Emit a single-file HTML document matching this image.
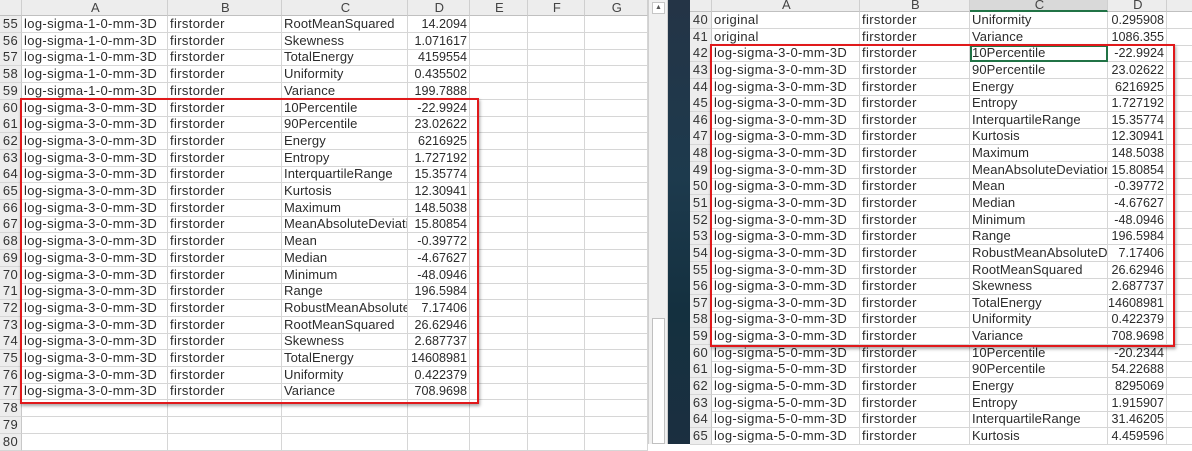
<!DOCTYPE html>
<html><head><meta charset="utf-8"><style>
*{margin:0;padding:0;box-sizing:border-box}
body{width:1192px;height:444px;overflow:hidden;background:#fff;font-family:"Liberation Sans","Noto Sans CJK SC",sans-serif;font-size:13px;color:#2b2b2b;position:relative}
.r{position:absolute;display:flex;height:17px;line-height:16px;white-space:nowrap}
.r div{border-right:1px solid #d6d6d6;border-bottom:1px solid #d6d6d6;overflow:hidden;padding-left:2px;letter-spacing:0.35px;flex:none}
.r .c3{letter-spacing:0.1px}
.r .n{background:#ededed;text-align:center;padding:0;color:#333;border-right:1px solid #c8c8c8}
.r .d{text-align:right;padding:0 2px 0 0;letter-spacing:0;font-size:12.6px}
.h div{background:#ededed;text-align:center;color:#444;border-right:1px solid #cfcfcf;border-bottom:1px solid #c0c0c0}
#L .r{left:0}
#L .c0{width:22px}#L .c1{width:146px}#L .c2{width:114px}#L .c3{width:126px}#L .c4{width:62px}#L .c5{width:58px}#L .c6{width:57px}#L .c7{width:63px}
#R .r{left:690px}
#R .c0{width:22px}#R .c1{width:148px}#R .c2{width:110px}#R .c3{width:138px}#R .c4{width:59px}#R .c5{width:40px}
.box{position:absolute;border:2px solid #e0191b;box-shadow:1px 2px 3px rgba(0,0,0,.35)}
</style></head><body>
<div id="L">
<div class="r h" style="top:0;height:16px"><div class="c0"></div><div class="c1">A</div><div class="c2">B</div><div class="c3">C</div><div class="c4">D</div><div class="c5">E</div><div class="c6">F</div><div class="c7">G</div></div>
<div class="r" style="top:16px"><div class="n c0">55</div><div class="c1">log-sigma-1-0-mm-3D</div><div class="c2">firstorder</div><div class="c3">RootMeanSquared</div><div class="c4 d">14.2094</div><div class="c5"></div><div class="c6"></div><div class="c7"></div></div>
<div class="r" style="top:32.7px"><div class="n c0">56</div><div class="c1">log-sigma-1-0-mm-3D</div><div class="c2">firstorder</div><div class="c3">Skewness</div><div class="c4 d">1.071617</div><div class="c5"></div><div class="c6"></div><div class="c7"></div></div>
<div class="r" style="top:49.4px"><div class="n c0">57</div><div class="c1">log-sigma-1-0-mm-3D</div><div class="c2">firstorder</div><div class="c3">TotalEnergy</div><div class="c4 d">4159554</div><div class="c5"></div><div class="c6"></div><div class="c7"></div></div>
<div class="r" style="top:66.1px"><div class="n c0">58</div><div class="c1">log-sigma-1-0-mm-3D</div><div class="c2">firstorder</div><div class="c3">Uniformity</div><div class="c4 d">0.435502</div><div class="c5"></div><div class="c6"></div><div class="c7"></div></div>
<div class="r" style="top:82.8px"><div class="n c0">59</div><div class="c1">log-sigma-1-0-mm-3D</div><div class="c2">firstorder</div><div class="c3">Variance</div><div class="c4 d">199.7888</div><div class="c5"></div><div class="c6"></div><div class="c7"></div></div>
<div class="r" style="top:99.5px"><div class="n c0">60</div><div class="c1">log-sigma-3-0-mm-3D</div><div class="c2">firstorder</div><div class="c3">10Percentile</div><div class="c4 d">-22.9924</div><div class="c5"></div><div class="c6"></div><div class="c7"></div></div>
<div class="r" style="top:116.2px"><div class="n c0">61</div><div class="c1">log-sigma-3-0-mm-3D</div><div class="c2">firstorder</div><div class="c3">90Percentile</div><div class="c4 d">23.02622</div><div class="c5"></div><div class="c6"></div><div class="c7"></div></div>
<div class="r" style="top:132.9px"><div class="n c0">62</div><div class="c1">log-sigma-3-0-mm-3D</div><div class="c2">firstorder</div><div class="c3">Energy</div><div class="c4 d">6216925</div><div class="c5"></div><div class="c6"></div><div class="c7"></div></div>
<div class="r" style="top:149.6px"><div class="n c0">63</div><div class="c1">log-sigma-3-0-mm-3D</div><div class="c2">firstorder</div><div class="c3">Entropy</div><div class="c4 d">1.727192</div><div class="c5"></div><div class="c6"></div><div class="c7"></div></div>
<div class="r" style="top:166.3px"><div class="n c0">64</div><div class="c1">log-sigma-3-0-mm-3D</div><div class="c2">firstorder</div><div class="c3">InterquartileRange</div><div class="c4 d">15.35774</div><div class="c5"></div><div class="c6"></div><div class="c7"></div></div>
<div class="r" style="top:183px"><div class="n c0">65</div><div class="c1">log-sigma-3-0-mm-3D</div><div class="c2">firstorder</div><div class="c3">Kurtosis</div><div class="c4 d">12.30941</div><div class="c5"></div><div class="c6"></div><div class="c7"></div></div>
<div class="r" style="top:199.7px"><div class="n c0">66</div><div class="c1">log-sigma-3-0-mm-3D</div><div class="c2">firstorder</div><div class="c3">Maximum</div><div class="c4 d">148.5038</div><div class="c5"></div><div class="c6"></div><div class="c7"></div></div>
<div class="r" style="top:216.4px"><div class="n c0">67</div><div class="c1">log-sigma-3-0-mm-3D</div><div class="c2">firstorder</div><div class="c3">MeanAbsoluteDeviation</div><div class="c4 d">15.80854</div><div class="c5"></div><div class="c6"></div><div class="c7"></div></div>
<div class="r" style="top:233.1px"><div class="n c0">68</div><div class="c1">log-sigma-3-0-mm-3D</div><div class="c2">firstorder</div><div class="c3">Mean</div><div class="c4 d">-0.39772</div><div class="c5"></div><div class="c6"></div><div class="c7"></div></div>
<div class="r" style="top:249.8px"><div class="n c0">69</div><div class="c1">log-sigma-3-0-mm-3D</div><div class="c2">firstorder</div><div class="c3">Median</div><div class="c4 d">-4.67627</div><div class="c5"></div><div class="c6"></div><div class="c7"></div></div>
<div class="r" style="top:266.5px"><div class="n c0">70</div><div class="c1">log-sigma-3-0-mm-3D</div><div class="c2">firstorder</div><div class="c3">Minimum</div><div class="c4 d">-48.0946</div><div class="c5"></div><div class="c6"></div><div class="c7"></div></div>
<div class="r" style="top:283.2px"><div class="n c0">71</div><div class="c1">log-sigma-3-0-mm-3D</div><div class="c2">firstorder</div><div class="c3">Range</div><div class="c4 d">196.5984</div><div class="c5"></div><div class="c6"></div><div class="c7"></div></div>
<div class="r" style="top:299.9px"><div class="n c0">72</div><div class="c1">log-sigma-3-0-mm-3D</div><div class="c2">firstorder</div><div class="c3">RobustMeanAbsoluteDeviation</div><div class="c4 d">7.17406</div><div class="c5"></div><div class="c6"></div><div class="c7"></div></div>
<div class="r" style="top:316.6px"><div class="n c0">73</div><div class="c1">log-sigma-3-0-mm-3D</div><div class="c2">firstorder</div><div class="c3">RootMeanSquared</div><div class="c4 d">26.62946</div><div class="c5"></div><div class="c6"></div><div class="c7"></div></div>
<div class="r" style="top:333.3px"><div class="n c0">74</div><div class="c1">log-sigma-3-0-mm-3D</div><div class="c2">firstorder</div><div class="c3">Skewness</div><div class="c4 d">2.687737</div><div class="c5"></div><div class="c6"></div><div class="c7"></div></div>
<div class="r" style="top:350px"><div class="n c0">75</div><div class="c1">log-sigma-3-0-mm-3D</div><div class="c2">firstorder</div><div class="c3">TotalEnergy</div><div class="c4 d">14608981</div><div class="c5"></div><div class="c6"></div><div class="c7"></div></div>
<div class="r" style="top:366.7px"><div class="n c0">76</div><div class="c1">log-sigma-3-0-mm-3D</div><div class="c2">firstorder</div><div class="c3">Uniformity</div><div class="c4 d">0.422379</div><div class="c5"></div><div class="c6"></div><div class="c7"></div></div>
<div class="r" style="top:383.4px"><div class="n c0">77</div><div class="c1">log-sigma-3-0-mm-3D</div><div class="c2">firstorder</div><div class="c3">Variance</div><div class="c4 d">708.9698</div><div class="c5"></div><div class="c6"></div><div class="c7"></div></div>
<div class="r" style="top:400.1px"><div class="n c0">78</div><div class="c1"></div><div class="c2"></div><div class="c3"></div><div class="c4"></div><div class="c5"></div><div class="c6"></div><div class="c7"></div></div>
<div class="r" style="top:416.8px"><div class="n c0">79</div><div class="c1"></div><div class="c2"></div><div class="c3"></div><div class="c4"></div><div class="c5"></div><div class="c6"></div><div class="c7"></div></div>
<div class="r" style="top:433.5px"><div class="n c0">80</div><div class="c1"></div><div class="c2"></div><div class="c3"></div><div class="c4"></div><div class="c5"></div><div class="c6"></div><div class="c7"></div></div>
</div>
<div class="box" style="left:20px;top:98px;width:459px;height:306px"></div>
<div style="position:absolute;left:648px;top:0;width:20px;height:444px;background:#f0f0f0;border-left:1px solid #d0d0d0;border-right:1px solid #d0d0d0"></div>
<div style="position:absolute;left:652px;top:2px;width:13px;height:12px;background:#fff;border:1px solid #c6c6c6;font-size:7px;line-height:10px;text-align:center;color:#555">▲</div>
<div style="position:absolute;left:652px;top:318px;width:13px;height:126px;background:#fff;border:1px solid #c0c0c0"></div>
<div style="position:absolute;left:668px;top:0;width:22px;height:444px;background:linear-gradient(180deg,#243446 0%,#1d3a4d 40%,#14303f 70%,#1b2f40 100%)"></div>
<div id="R">
<div class="r h" style="top:0;height:12px;line-height:10px"><div class="c0"></div><div class="c1">A</div><div class="c2">B</div><div class="c3" style="background:#d9d9d9;border-bottom:2px solid #217346">C</div><div class="c4">D</div><div class="c5"></div></div>
<div class="r" style="top:12px"><div class="n c0">40</div><div class="c1">original</div><div class="c2">firstorder</div><div class="c3">Uniformity</div><div class="c4 d">0.295908</div><div class="c5"></div></div>
<div class="r" style="top:28.6px"><div class="n c0">41</div><div class="c1">original</div><div class="c2">firstorder</div><div class="c3">Variance</div><div class="c4 d">1086.355</div><div class="c5"></div></div>
<div class="r" style="top:45.3px"><div class="n c0">42</div><div class="c1">log-sigma-3-0-mm-3D</div><div class="c2">firstorder</div><div class="c3" style="outline:2px solid #217346;outline-offset:-2px">10Percentile</div><div class="c4 d">-22.9924</div><div class="c5"></div></div>
<div class="r" style="top:61.9px"><div class="n c0">43</div><div class="c1">log-sigma-3-0-mm-3D</div><div class="c2">firstorder</div><div class="c3">90Percentile</div><div class="c4 d">23.02622</div><div class="c5"></div></div>
<div class="r" style="top:78.5px"><div class="n c0">44</div><div class="c1">log-sigma-3-0-mm-3D</div><div class="c2">firstorder</div><div class="c3">Energy</div><div class="c4 d">6216925</div><div class="c5"></div></div>
<div class="r" style="top:95.2px"><div class="n c0">45</div><div class="c1">log-sigma-3-0-mm-3D</div><div class="c2">firstorder</div><div class="c3">Entropy</div><div class="c4 d">1.727192</div><div class="c5"></div></div>
<div class="r" style="top:111.8px"><div class="n c0">46</div><div class="c1">log-sigma-3-0-mm-3D</div><div class="c2">firstorder</div><div class="c3">InterquartileRange</div><div class="c4 d">15.35774</div><div class="c5"></div></div>
<div class="r" style="top:128.4px"><div class="n c0">47</div><div class="c1">log-sigma-3-0-mm-3D</div><div class="c2">firstorder</div><div class="c3">Kurtosis</div><div class="c4 d">12.30941</div><div class="c5"></div></div>
<div class="r" style="top:145.1px"><div class="n c0">48</div><div class="c1">log-sigma-3-0-mm-3D</div><div class="c2">firstorder</div><div class="c3">Maximum</div><div class="c4 d">148.5038</div><div class="c5"></div></div>
<div class="r" style="top:161.7px"><div class="n c0">49</div><div class="c1">log-sigma-3-0-mm-3D</div><div class="c2">firstorder</div><div class="c3">MeanAbsoluteDeviation</div><div class="c4 d">15.80854</div><div class="c5"></div></div>
<div class="r" style="top:178.3px"><div class="n c0">50</div><div class="c1">log-sigma-3-0-mm-3D</div><div class="c2">firstorder</div><div class="c3">Mean</div><div class="c4 d">-0.39772</div><div class="c5"></div></div>
<div class="r" style="top:195px"><div class="n c0">51</div><div class="c1">log-sigma-3-0-mm-3D</div><div class="c2">firstorder</div><div class="c3">Median</div><div class="c4 d">-4.67627</div><div class="c5"></div></div>
<div class="r" style="top:211.6px"><div class="n c0">52</div><div class="c1">log-sigma-3-0-mm-3D</div><div class="c2">firstorder</div><div class="c3">Minimum</div><div class="c4 d">-48.0946</div><div class="c5"></div></div>
<div class="r" style="top:228.2px"><div class="n c0">53</div><div class="c1">log-sigma-3-0-mm-3D</div><div class="c2">firstorder</div><div class="c3">Range</div><div class="c4 d">196.5984</div><div class="c5"></div></div>
<div class="r" style="top:244.9px"><div class="n c0">54</div><div class="c1">log-sigma-3-0-mm-3D</div><div class="c2">firstorder</div><div class="c3">RobustMeanAbsoluteDeviation</div><div class="c4 d">7.17406</div><div class="c5"></div></div>
<div class="r" style="top:261.5px"><div class="n c0">55</div><div class="c1">log-sigma-3-0-mm-3D</div><div class="c2">firstorder</div><div class="c3">RootMeanSquared</div><div class="c4 d">26.62946</div><div class="c5"></div></div>
<div class="r" style="top:278.1px"><div class="n c0">56</div><div class="c1">log-sigma-3-0-mm-3D</div><div class="c2">firstorder</div><div class="c3">Skewness</div><div class="c4 d">2.687737</div><div class="c5"></div></div>
<div class="r" style="top:294.8px"><div class="n c0">57</div><div class="c1">log-sigma-3-0-mm-3D</div><div class="c2">firstorder</div><div class="c3">TotalEnergy</div><div class="c4 d">14608981</div><div class="c5"></div></div>
<div class="r" style="top:311.4px"><div class="n c0">58</div><div class="c1">log-sigma-3-0-mm-3D</div><div class="c2">firstorder</div><div class="c3">Uniformity</div><div class="c4 d">0.422379</div><div class="c5"></div></div>
<div class="r" style="top:328px"><div class="n c0">59</div><div class="c1">log-sigma-3-0-mm-3D</div><div class="c2">firstorder</div><div class="c3">Variance</div><div class="c4 d">708.9698</div><div class="c5"></div></div>
<div class="r" style="top:344.7px"><div class="n c0">60</div><div class="c1">log-sigma-5-0-mm-3D</div><div class="c2">firstorder</div><div class="c3">10Percentile</div><div class="c4 d">-20.2344</div><div class="c5"></div></div>
<div class="r" style="top:361.3px"><div class="n c0">61</div><div class="c1">log-sigma-5-0-mm-3D</div><div class="c2">firstorder</div><div class="c3">90Percentile</div><div class="c4 d">54.22688</div><div class="c5"></div></div>
<div class="r" style="top:377.9px"><div class="n c0">62</div><div class="c1">log-sigma-5-0-mm-3D</div><div class="c2">firstorder</div><div class="c3">Energy</div><div class="c4 d">8295069</div><div class="c5"></div></div>
<div class="r" style="top:394.6px"><div class="n c0">63</div><div class="c1">log-sigma-5-0-mm-3D</div><div class="c2">firstorder</div><div class="c3">Entropy</div><div class="c4 d">1.915907</div><div class="c5"></div></div>
<div class="r" style="top:411.2px"><div class="n c0">64</div><div class="c1">log-sigma-5-0-mm-3D</div><div class="c2">firstorder</div><div class="c3">InterquartileRange</div><div class="c4 d">31.46205</div><div class="c5"></div></div>
<div class="r" style="top:427.8px"><div class="n c0">65</div><div class="c1">log-sigma-5-0-mm-3D</div><div class="c2">firstorder</div><div class="c3">Kurtosis</div><div class="c4 d">4.459596</div><div class="c5"></div></div>
</div>
<div class="box" style="left:710px;top:44px;width:465px;height:303px"></div>
</body></html>
